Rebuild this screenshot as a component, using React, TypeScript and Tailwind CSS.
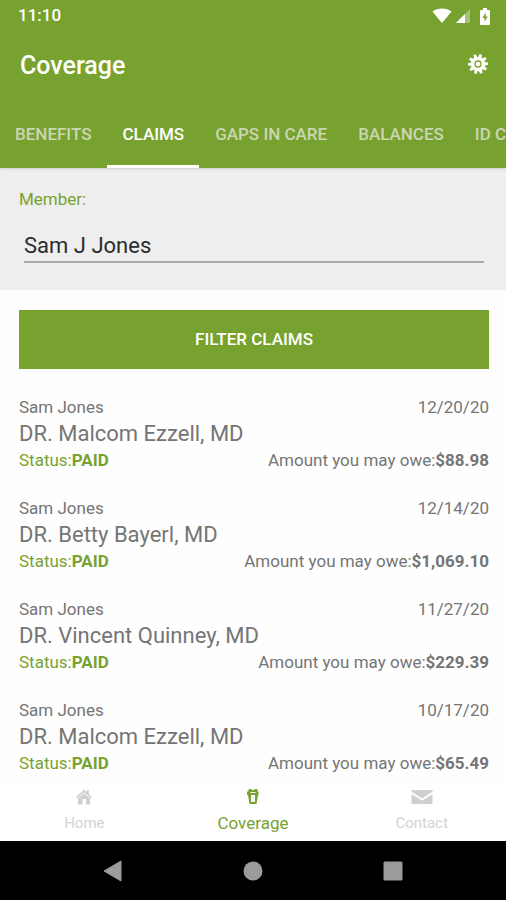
import React from 'react';

const tabs = ['BENEFITS', 'CLAIMS', 'GAPS IN CARE', 'BALANCES', 'ID CARDS'];

const claims = [
    { member: 'Sam Jones', date: '12/20/20', doctor: 'DR. Malcom Ezzell, MD', amount: '$88.98' },
    { member: 'Sam Jones', date: '12/14/20', doctor: 'DR. Betty Bayerl, MD', amount: '$1,069.10' },
    { member: 'Sam Jones', date: '11/27/20', doctor: 'DR. Vincent Quinney, MD', amount: '$229.39' },
    { member: 'Sam Jones', date: '10/17/20', doctor: 'DR. Malcom Ezzell, MD', amount: '$65.49' },
];

const StatusIcons = () => (
    <div className="flex items-center">
        <svg width="20" height="16" viewBox="0 0 20 16" fill="#fff">
            <path d="M.5 3.500C5.500-.4 14.500-.4 19.500 3.500L10 15z" />
        </svg>
        <svg width="16" height="16" viewBox="0 0 16 16" className="ml-1">
            <path d="M14 1v14H0z" fill="#fff" fillOpacity="0.35" />
            <path d="M9 6v9H0z" fill="#fff" />
        </svg>
        <svg width="10" height="17" viewBox="0 0 10 17" className="ml-2">
            <path d="M3 0h4v2h2q1 0 1 1v13q0 1-1 1H1q-1 0-1-1V3q0-1 1-1h2z" fill="#fff" />
            <path d="M5.800 4.500 2.500 10h2v4l3.200-5.500h-2z" fill="#78a22f" />
        </svg>
    </div>
);

const GearIcon = () => (
    <svg width="20" height="20" viewBox="-10 -10 20 20">
        <g fill="#fff">
            <circle r="7" />
            {[0, 36, 72, 108, 144, 180, 216, 252, 288, 324].map((angle) => (
                <path key={angle} d="M-1.900-6-1.200-10h2.400L1.900-6z" transform={`rotate(${angle + 16})`} />
            ))}
        </g>
        <circle r="3" fill="none" stroke="#78a22f" strokeWidth="1.300" />
    </svg>
);

const HomeIcon = () => (
    <svg width="16" height="16" viewBox="0 0 16 16" fill="#cfcfcf">
        <path d="M8 .8 10.500 3V1.500h2.500v4L15.800 8l-1 1.200L8 3.200 1.200 9.200.2 8z" />
        <path d="M8 4.200 14 9.400V15.500H10V10H6.500v5.500H2V9.400z" />
    </svg>
);

const CoverageIcon = () => (
    <svg width="12" height="16" viewBox="0 0 12 16" fill="#78a22f">
        <path d="M1.500 0H4l1 1h2l1-1h2.500v2.500h1V6H0V2.500h1.500z" />
        <path d="M1 6h3v7h4V6h3l-1.500 9h-7z" />
        <path d="M5.500 7h1v6h-1z" fillOpacity="0.25" />
        <path d="M3.500 3h5v1h-5z" fill="#fff" />
    </svg>
);

const MailIcon = () => (
    <svg width="22" height="16" viewBox="0 0 22 16" fill="#cfcfcf">
        <path d="M.5 1h21v1.800L11 9.500.5 2.800z" />
        <path d="M.5 5 11 11.700 21.500 5v10H.5z" />
    </svg>
);

const navItems = [
    { label: 'Home', icon: <HomeIcon />, active: false },
    { label: 'Coverage', icon: <CoverageIcon />, active: true },
    { label: 'Contact', icon: <MailIcon />, active: false },
];

export const App = () => {
    return (
        <div className="flex min-h-screen flex-col overflow-hidden bg-[#fefefe] font-['Roboto',sans-serif] text-[17px] text-[#757575]">
            <header className="z-10 bg-[#78a22f] text-white shadow">
                <div className="flex h-8 items-center justify-between pl-[18px] pr-4">
                    <span className="font-medium">11:10</span>
                    <StatusIcons />
                </div>
                <div className="flex h-[68px] items-center justify-between pl-5 pr-[18px]">
                    <h1 className="text-[25px] font-medium">Coverage</h1>
                    <button type="button" aria-label="Settings" className="flex h-6 items-start">
                        <GearIcon />
                    </button>
                </div>
                <nav className="flex h-[68px] gap-px overflow-hidden whitespace-nowrap font-medium">
                    {tabs.map((tab) => (
                        <a
                            key={tab}
                            href="#"
                            className={
                                tab === 'CLAIMS'
                                    ? 'flex shrink-0 items-center border-y-3 border-t-transparent border-b-white px-[15px] pt-0.5'
                                    : 'flex shrink-0 items-center px-[15px] pt-0.5 text-[#cad6b4]'
                            }
                        >
                            {tab}
                        </a>
                    ))}
                </nav>
            </header>

            <section className="bg-[#eee] pb-[27px] pl-[19px] pr-[17px] pt-[19px]">
                <label htmlFor="member" className="block leading-6 text-[#78a22f]">
                    Member:
                </label>
                <div className="px-[5px] pt-[18px]">
                    <input
                        id="member"
                        type="text"
                        defaultValue="Sam J Jones"
                        className="block h-[34px] w-full border-b-2 border-[#a9a9a9] text-[22px] text-[#2b2b2b] outline-none"
                    />
                </div>
            </section>

            <main className="flex-1 pl-[19px] pr-[17px] pt-5">
                <button type="button" className="block h-[59px] w-full bg-[#78a22f] font-medium text-white">
                    FILTER CLAIMS
                </button>
                <ul className="flex flex-col gap-6 pt-[26px]">
                    {claims.map((claim) => (
                        <li key={claim.date}>
                            <div className="flex justify-between leading-6">
                                <span>{claim.member}</span>
                                <span>{claim.date}</span>
                            </div>
                            <h2 className="text-[22px] leading-[29px]">{claim.doctor}</h2>
                            <div className="flex justify-between leading-6">
                                <span className="text-[#78a22f]">
                                    Status:<b>PAID</b>
                                </span>
                                <span>
                                    Amount you may owe:<b>{claim.amount}</b>
                                </span>
                            </div>
                        </li>
                    ))}
                </ul>
            </main>

            <nav className="grid grid-cols-3 bg-white pb-1.5 pt-2">
                {navItems.map((item) => (
                    <a
                        key={item.label}
                        href="#"
                        className={
                            item.active
                                ? 'flex flex-col items-center gap-1.5 text-[#78a22f]'
                                : 'flex flex-col items-center gap-1.5 text-[15px] text-[#d3d3d3]'
                        }
                    >
                        {item.icon}
                        <span className="leading-6">{item.label}</span>
                    </a>
                ))}
            </nav>

            <div className="grid h-[59px] grid-cols-3 place-items-center bg-black px-[43px]">
                <button type="button" aria-label="Back">
                    <svg width="20" height="22" viewBox="0 0 20 22" fill="#9b9b9b">
                        <path d="M18 1v20L1 11z" stroke="#9b9b9b" strokeLinejoin="round" />
                    </svg>
                </button>
                <button type="button" aria-label="Home screen">
                    <svg width="20" height="20" viewBox="0 0 20 20" fill="#9b9b9b">
                        <circle cx="10" cy="10" r="9.500" />
                    </svg>
                </button>
                <button type="button" aria-label="Recent apps">
                    <svg width="20" height="20" viewBox="0 0 20 20" fill="#9b9b9b">
                        <rect x=".5" y=".5" width="19" height="19" rx="1.500" />
                    </svg>
                </button>
            </div>
        </div>
    );
};

export default App;
